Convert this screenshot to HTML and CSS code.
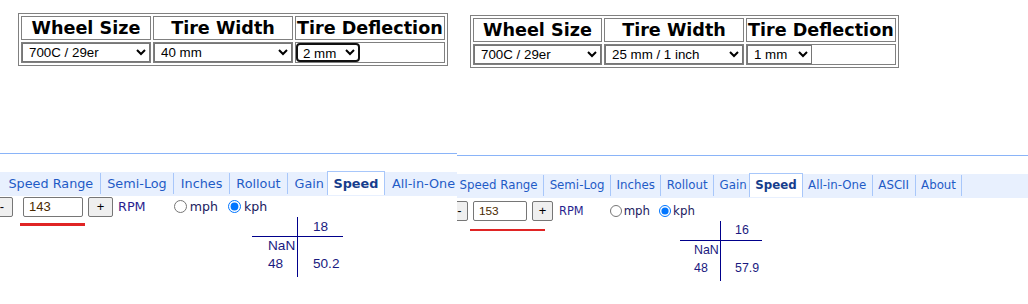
FILE: index.html
```html
<!DOCTYPE html>
<html>
<head>
<meta charset="utf-8">
<title>Gear Calculator</title>
<link rel="stylesheet" href="styles.css">
</head>
<body>
<div class="page">
  <section class="panel p-left">
    <table class="sizes">
      <tr><th>Wheel Size</th><th>Tire Width</th><th>Tire Deflection</th></tr>
      <tr>
        <td><select class="sel s-wheel"><option>700C / 29er</option></select></td>
        <td><select class="sel s-width"><option>40 mm</option></select></td>
        <td><select class="sel s-defl focus"><option>2 mm</option></select></td>
      </tr>
    </table>
    <div class="rule"></div>
    <nav class="tabs">
      <span class="tab">Speed Range</span>
      <span class="tab">Semi-Log</span>
      <span class="tab">Inches</span>
      <span class="tab">Rollout</span>
      <span class="tab">Gain</span>
      <span class="tab active">Speed</span>
      <span class="tab">All-in-One</span>
    </nav>
    <div class="controls">
      <button class="step minus">-</button>
      <span class="rpm-wrap"><input class="rpm" type="text" value="143"></span>
      <button class="step plus">+</button>
      <span class="lbl">RPM</span>
      <label class="opt opt-mph"><input type="radio" name="u1">mph</label>
      <label class="opt opt-kph"><input type="radio" name="u1" checked>kph</label>
    </div>
    <div class="speed">
      <div class="c c1 top"></div><div class="c c2 top">18</div>
      <div class="c c1">NaN</div><div class="c c2"></div>
      <div class="c c1 last">48</div><div class="c c2 last">50.2</div>
    </div>
  </section>

  <section class="panel p-right">
    <table class="sizes">
      <tr><th>Wheel Size</th><th>Tire Width</th><th>Tire Deflection</th></tr>
      <tr>
        <td><select class="sel s-wheel"><option>700C / 29er</option></select></td>
        <td><select class="sel s-width"><option>25 mm / 1 inch</option></select></td>
        <td><select class="sel s-defl"><option>1 mm</option></select></td>
      </tr>
    </table>
    <div class="rule"></div>
    <nav class="tabs">
      <span class="tab">Speed Range</span>
      <span class="tab">Semi-Log</span>
      <span class="tab">Inches</span>
      <span class="tab">Rollout</span>
      <span class="tab">Gain</span>
      <span class="tab active">Speed</span>
      <span class="tab">All-in-One</span>
      <span class="tab">ASCII</span>
      <span class="tab">About</span>
    </nav>
    <div class="controls">
      <button class="step minus">-</button>
      <span class="rpm-wrap"><input class="rpm" type="text" value="153"></span>
      <button class="step plus">+</button>
      <span class="lbl">RPM</span>
      <label class="opt opt-mph"><input type="radio" name="u2">mph</label>
      <label class="opt opt-kph"><input type="radio" name="u2" checked>kph</label>
    </div>
    <div class="speed">
      <div class="c c1 top"></div><div class="c c2 top">16</div>
      <div class="c c1">NaN</div><div class="c c2"></div>
      <div class="c c1 last">48</div><div class="c c2 last">57.9</div>
    </div>
  </section>
</div>
</body>
</html>
```

FILE: styles.css
```css
html, body {
  margin: 0;
  padding: 0;
  background: #ffffff;
}
body {
  font-family: "DejaVu Sans", Verdana, sans-serif;
}
.page {
  display: flex;
  width: 1028px;
  height: 304px;
  overflow: hidden;
}
.panel {
  position: relative;
  flex: none;
  overflow: hidden;
  height: 304px;
}
.p-left { width: 457px; }
.p-right { width: 571px; }

/* ---------- size table ---------- */
.sizes {
  border: 1px solid #808080;
  border-spacing: 2px;
  margin: 13px 0 0 18px;
}
.p-right .sizes { margin: 15px 0 0 13px; }
.sizes th {
  border: 1px solid #808080;
  padding: 1px;
  font-family: "DejaVu Sans", Verdana, sans-serif;
  font-weight: bold;
  font-size: 17.6px;
  line-height: 20px;
  color: #000;
  text-align: center;
  white-space: nowrap;
}
.sizes td {
  border: 1px solid #808080;
  padding: 0;
  text-align: left;
}
.sel {
  display: block;
  box-sizing: border-box;
  height: 19px;
  margin: 0;
  font-family: "Liberation Sans", Arial, sans-serif;
  font-size: 13.33px;
  color: #000;
  background: #fff;
  border: 1px solid #767676;
  border-radius: 0;
  padding: 0 0 0 2px;
}
.p-left .s-wheel { width: 128px; }
.p-left .s-width { width: 138px; }
.p-left .s-defl { width: 64px; }
.p-right .s-wheel { width: 127px; }
.p-right .s-width { width: 138px; }
.p-right .s-defl { width: 65px; }
.sel.focus {
  border: 2px solid #111;
  border-radius: 4px;
  padding-left: 1px;
}

/* ---------- divider ---------- */
.rule {
  margin-top: 87px;
  border-top: 1px solid #8ab4f8;
}

/* ---------- tabs ---------- */
.tabs {
  display: flex;
  margin-top: 18px;
  height: 24px;
  padding-left: 2px;
  background: #e8f0fe;
  white-space: nowrap;
}
.tab {
  flex: none;
  margin: 1px 0 2px;
  padding: 0 6.5px;
  border-right: 1px solid #a8c7fa;
  font-size: 12.8px;
  line-height: 21px;
  color: #1f5bc6;
}
.tab.active {
  position: relative;
  margin: -1px 0 1px -4px;
  padding: 0 6px 0 5px;
  line-height: 23px;
  background: #fff;
  border: 1px solid #a8c7fa;
  border-bottom: none;
  font-weight: bold;
  color: #163d8c;
}
.p-right .tabs {
  margin-top: 18px;
  margin-left: -3px;
  padding-left: 0;
}
.p-right .tab {
  font-size: 11.8px;
  padding: 0 5.5px;
}
.p-right .tab.active {
  padding: 0 5px 0 5px;
}

/* ---------- controls ---------- */
.controls {
  display: flex;
  align-items: center;
  height: 21px;
  white-space: nowrap;
}
.step {
  box-sizing: border-box;
  height: 20px;
  padding: 0;
  margin: 0;
  font-family: "Liberation Sans", Arial, sans-serif;
  font-size: 13px;
  color: #000;
  background: #efefef;
  border: 1px solid #767676;
  border-radius: 2px;
}
.minus { width: 22px; margin-left: -9px; }
.plus { width: 25px; margin-left: 5px; }
.rpm-wrap {
  position: relative;
  display: block;
  margin-left: 10px;
}
.rpm {
  display: block;
  box-sizing: border-box;
  width: 60px;
  height: 20px;
  margin: 0;
  padding: 0 5px;
  font-family: "Liberation Sans", Arial, sans-serif;
  font-size: 13px;
  color: #4a2a00;
  border: 1px solid #767676;
  border-radius: 2px;
}
.rpm-wrap::after {
  content: "";
  position: absolute;
  left: -3px;
  top: 26px;
  width: 65px;
  height: 3px;
  background: #e02424;
}
.lbl {
  margin-left: 5px;
  font-size: 12.8px;
  color: #2a1f8f;
}
.opt {
  display: flex;
  align-items: center;
  font-size: 12.6px;
  color: #1a1a5e;
}
.opt input {
  width: 13px;
  height: 13px;
  margin: 0 3px 0 0;
}
.opt-mph { margin-left: 28px; }
.opt-kph { margin-left: 10px; }

.p-right .controls { margin-top: 2px; }
.p-right .minus { width: 17px; margin-left: -6px; }
.p-right .rpm-wrap { margin-left: 5px; }
.p-right .rpm { width: 54px; font-size: 11.8px; }
.p-right .rpm-wrap::after { top: 28px; width: 75px; height: 2.5px; }
.p-right .plus { width: 21px; margin-left: 5px; }
.p-right .lbl { margin-left: 6px; font-size: 11.4px; }
.p-right .opt { font-size: 11.8px; }
.p-right .opt input { width: 12px; height: 12px; margin-right: 2px; }
.p-right .opt-mph { margin-left: 26px; }
.p-right .opt-kph { margin-left: 9px; }

/* ---------- speed grid ---------- */
.speed {
  display: grid;
  grid-template-columns: 45px 46px;
  grid-template-rows: 20px 18px 22px;
  margin-left: 252px;
  font-family: "Liberation Sans", Arial, sans-serif;
  font-size: 13.6px;
  color: #1a1a80;
}
.c {
  box-sizing: border-box;
  line-height: 18px;
  white-space: nowrap;
}
.c1 { padding-left: 16px; }
.c2 { padding-left: 15px; border-left: 1px solid #00008b; }
.top { border-bottom: 1px solid #00008b; line-height: 19px; }
.p-right .speed {
  grid-template-columns: 40px 42px;
  margin-left: 223px;
  margin-top: 0;
  font-size: 12.4px;
}
.p-right .c1 { padding-left: 14px; }
.p-right .c2 { padding-left: 14px; }
```
